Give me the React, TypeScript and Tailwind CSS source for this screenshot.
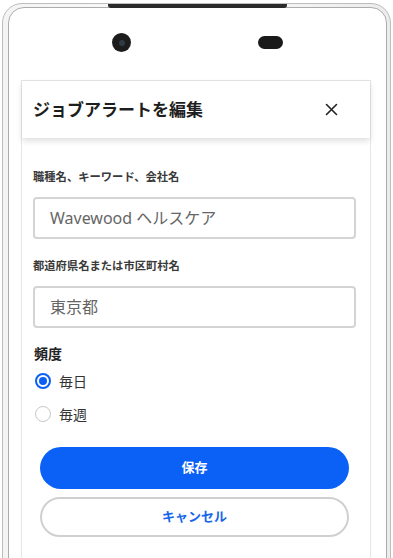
import { useState } from "react";

function CloseIcon() {
  return (
    <svg width="13" height="13" viewBox="0 0 13 13" fill="none">
      <path d="M1.5 1.5l10 10M11.5 1.5l-10 10" stroke="#222" strokeWidth="1.6" strokeLinecap="round" />
    </svg>
  );
}

function Radio({ checked }: { checked: boolean }) {
  return checked ? (
    <span className="w-[16px] h-[16px] rounded-full border-[2px] border-[#0b5ff5] flex items-center justify-center">
      <span className="w-[8px] h-[8px] rounded-full bg-[#0b5ff5]" />
    </span>
  ) : (
    <span className="w-[16px] h-[16px] rounded-full border-[1.5px] border-[#c8c8c8]" />
  );
}

export default function App() {
  const [freq, setFreq] = useState("daily");

  const options = [
    { key: "daily", label: "毎日" },
    { key: "weekly", label: "毎週" },
  ];

  return (
    <div
      className="w-[393px] h-[558px] bg-white overflow-hidden relative"
      style={{ fontFamily: '"Noto Sans", "Noto Sans CJK JP", sans-serif' }}
    >
      {/* phone frame */}
      <div className="ml-[2px] mt-[3px] w-[389px] h-[640px] rounded-[20px] border-[1.5px] border-[#bdbdbd] bg-gradient-to-r from-[#f4f4f4] via-[#fbfbfb] to-[#ececec] pl-[5px] pr-[3px] pt-[3px]">
        <div className="h-full rounded-[16px] border-[1.5px] border-[#acacac] bg-white">
          {/* camera + speaker */}
          <div className="h-[72px] flex items-start pl-[103px]">
            <div className="mt-[25px] w-[19px] h-[19px] rounded-full bg-[#1c1c1c] flex items-center justify-center">
              <div className="w-[6px] h-[6px] rounded-full bg-[#2f3a44]" />
            </div>
            <div className="ml-[127px] mt-[28px] w-[25px] h-[13px] rounded-full bg-[#1a1a1a]" />
          </div>

          {/* modal */}
          <div className="ml-[12px] w-[350px] h-[520px] border border-[#e6e6e6] bg-white">
            <div className="h-[57px] flex items-center justify-between pl-[11px] pr-[32px] shadow-[0_3px_6px_rgba(0,0,0,0.13)] relative">
              <h1 className="text-[17px] font-bold text-[#1e1e1e]">ジョブアラートを編集</h1>
              <CloseIcon />
            </div>

            <div className="pl-[11px] pr-[14px] pt-[31px]">
              <label className="block text-[11.3px] leading-[16px] font-bold text-[#3a3a3a]">
                職種名、キーワード、会社名
              </label>
              <div className="mt-[12px] h-[42px] rounded-[4px] border-[2px] border-[#d4d4d4] flex items-center pl-[15px] text-[16px] text-[#666]">
                Wavewood ヘルスケア
              </div>

              <label className="block mt-[19px] text-[11.3px] leading-[16px] font-bold text-[#3a3a3a]">
                都道府県名または市区町村名
              </label>
              <div className="mt-[12px] h-[42px] rounded-[4px] border-[2px] border-[#d4d4d4] flex items-center pl-[15px] text-[16px] text-[#666]">
                東京都
              </div>

              <p className="mt-[16px] text-[14px] leading-[20px] font-bold text-[#222] pl-[1px]">頻度</p>

              <div className="mt-[5px] flex flex-col gap-[9px]">
                {options.map((o) => (
                  <div
                    key={o.key}
                    className="h-[24px] flex items-center gap-[8px] pl-[2px] cursor-pointer"
                    onClick={() => setFreq(o.key)}
                  >
                    <Radio checked={freq === o.key} />
                    <span className="text-[14px] text-[#333]">{o.label}</span>
                  </div>
                ))}
              </div>

              <div className="mt-[21px] px-[7px] flex flex-col gap-[8px]">
                <button className="h-[42px] w-full rounded-full bg-[#0b60f6] text-white text-[13px] font-bold">
                  保存
                </button>
                <button className="h-[40px] w-full rounded-full border-[2px] border-[#d0d0d0] bg-white text-[#1766ea] text-[13px] font-bold">
                  キャンセル
                </button>
              </div>
            </div>
          </div>
        </div>
      </div>

      {/* top edge notch bar */}
      <div className="absolute left-[108px] top-[4px] w-[179px] h-[4px] rounded-b-[3px] bg-[#2a2a2a]" />
    </div>
  );
}
